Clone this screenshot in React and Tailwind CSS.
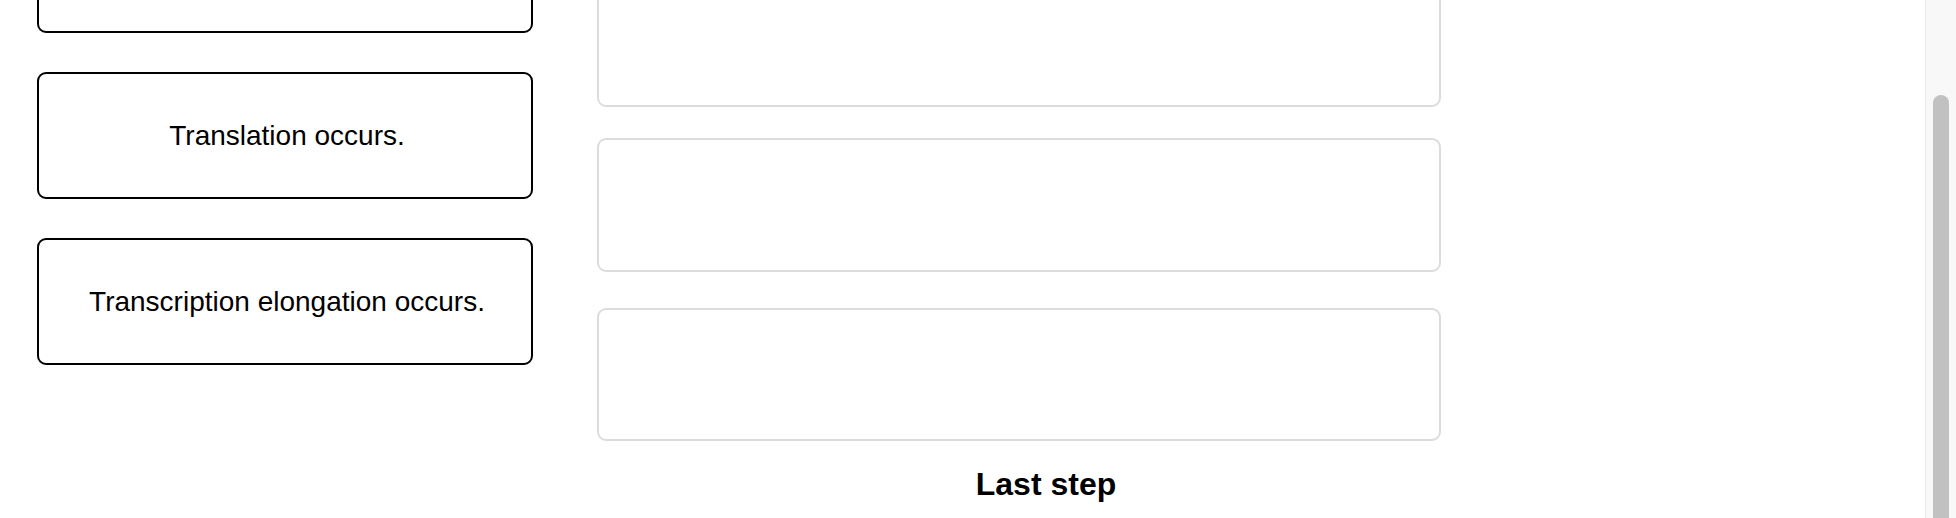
export default function App() {
  const steps = ["", "Translation occurs.", "Transcription elongation occurs."];
  return (
    <div
      className="flex h-[518px] w-full overflow-hidden bg-white text-black"
      style={{ fontFamily: '"Liberation Sans", Arial, Helvetica, sans-serif' }}
    >
      {/* page body */}
      <div className="flex flex-1 items-start pl-[37px]">
        {/* answer choices */}
        <div className="-mt-[94px] flex w-[496px] shrink-0 flex-col gap-[39px]">
          {steps.map((s, i) => (
            <div
              key={i}
              className="flex h-[127px] items-center justify-center rounded-[9px] border-2 border-black bg-white pl-[19px] pr-[15px] text-center text-[28px] leading-[32px]"
            >
              {s}
            </div>
          ))}
        </div>

        {/* drop slots */}
        <div className="-mt-[27px] ml-[64px] flex w-[844px] shrink-0 flex-col">
          <div className="h-[134px] rounded-[9px] border-2 border-[#dcdcdc] bg-white" />
          <div className="mt-[31px] h-[134px] rounded-[9px] border-2 border-[#dcdcdc] bg-white" />
          <div className="mt-[36px] h-[133px] rounded-[9px] border-2 border-[#dcdcdc] bg-white" />
          <h2 className="mt-[25px] pl-[54px] text-center text-[32px] font-bold leading-[37px]">
            Last step
          </h2>
        </div>
      </div>

      {/* scrollbar */}
      <div className="flex w-[31px] shrink-0 justify-center border-l border-[#e9e9e9] bg-[#f8f8f8] pt-[95px]">
        <div className="h-[460px] w-[16px] rounded-full bg-[#c1c1c1]" />
      </div>
    </div>
  );
}
